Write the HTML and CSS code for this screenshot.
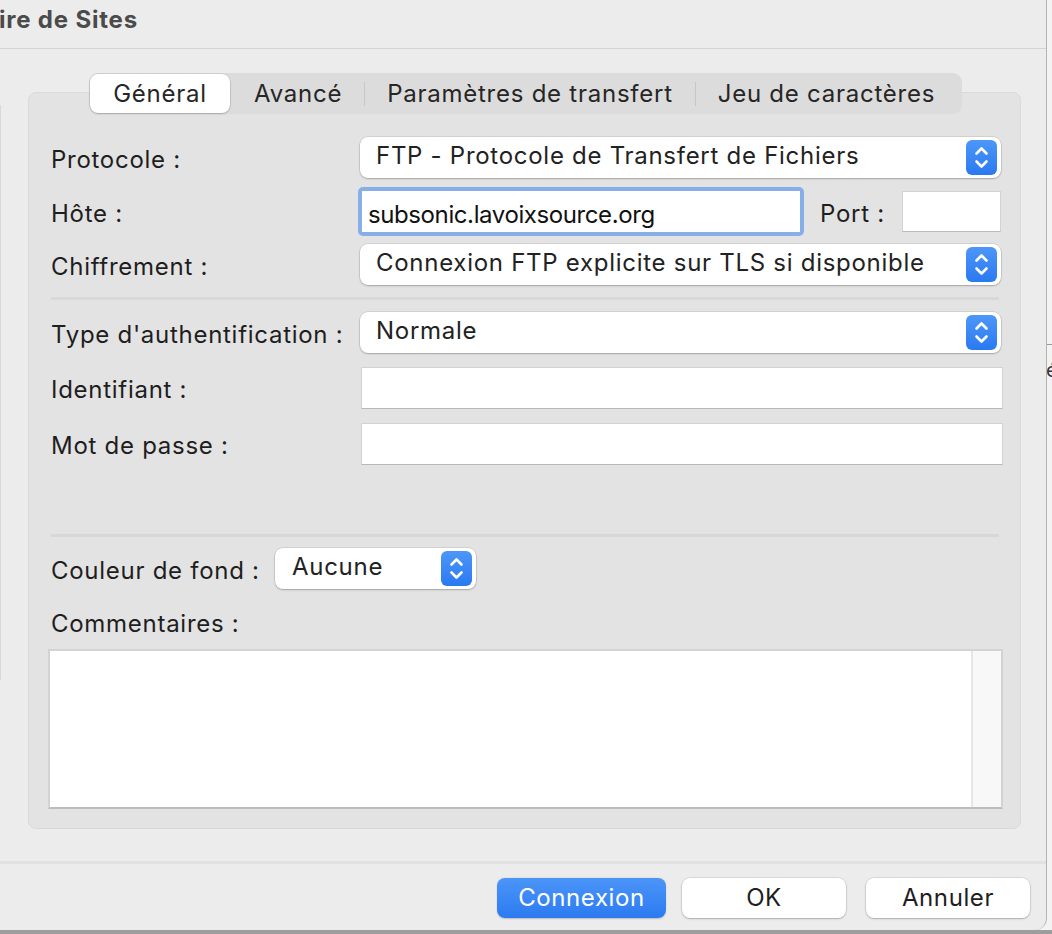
FILE: index.html
```html
<!DOCTYPE html>
<html lang="fr">
<head>
<meta charset="utf-8">
<title>Gestionnaire de Sites</title>
<link rel="stylesheet" href="styles.css">
</head>
<body>
<div class="screen">
  <div class="window">
    <div class="titlebar"><span class="title">ire de Sites</span></div>
    <div class="win-body">
      <div class="side"><div class="side-edge"></div></div>
      <div class="main">
        <div class="tabs">
          <div class="tab active">Général</div>
          <div class="tab">Avancé</div>
          <div class="tab-sep"></div>
          <div class="tab">Paramètres de transfert</div>
          <div class="tab-sep"></div>
          <div class="tab">Jeu de caractères</div>
        </div>
        <div class="panel">
          <div class="row r1">
            <div class="label">Protocole :</div>
            <div class="select full"><span class="sel-text">FTP - Protocole de Transfert de Fichiers</span><span class="stepper"><svg viewBox="0 0 31 35" width="31" height="35"><path d="M10.5 13.5 L15.5 8.5 L20.5 13.5" /><path d="M10.5 21.5 L15.5 26.5 L20.5 21.5" /></svg></span></div>
          </div>
          <div class="row r2">
            <div class="label">Hôte :</div>
            <div class="host-line">
              <div class="focus-ring"><div class="input host">subsonic.lavoixsource.org</div></div>
              <div class="port-label">Port :</div>
              <div class="input port"></div>
            </div>
          </div>
          <div class="row r3">
            <div class="label">Chiffrement :</div>
            <div class="select full"><span class="sel-text">Connexion FTP explicite sur TLS si disponible</span><span class="stepper"><svg viewBox="0 0 31 35" width="31" height="35"><path d="M10.5 13.5 L15.5 8.5 L20.5 13.5" /><path d="M10.5 21.5 L15.5 26.5 L20.5 21.5" /></svg></span></div>
          </div>
          <div class="sep sep1"></div>
          <div class="row r4">
            <div class="label">Type d'authentification :</div>
            <div class="select full"><span class="sel-text">Normale</span><span class="stepper"><svg viewBox="0 0 31 35" width="31" height="35"><path d="M10.5 13.5 L15.5 8.5 L20.5 13.5" /><path d="M10.5 21.5 L15.5 26.5 L20.5 21.5" /></svg></span></div>
          </div>
          <div class="row r5">
            <div class="label">Identifiant :</div>
            <div class="input plain"></div>
          </div>
          <div class="row r6">
            <div class="label">Mot de passe :</div>
            <div class="input plain"></div>
          </div>
          <div class="sep sep2"></div>
          <div class="row-color">
            <div class="label color-label">Couleur de fond :</div>
            <div class="select small"><span class="sel-text">Aucune</span><span class="stepper"><svg viewBox="0 0 31 35" width="31" height="35"><path d="M10.5 13.5 L15.5 8.5 L20.5 13.5" /><path d="M10.5 21.5 L15.5 26.5 L20.5 21.5" /></svg></span></div>
          </div>
          <div class="label comments-label">Commentaires :</div>
          <div class="textarea"><div class="ta-text"></div><div class="ta-scroll"></div></div>
        </div>
        <div class="footer-sep"></div>
        <div class="buttons">
          <button class="btn primary">Connexion</button>
          <button class="btn">OK</button>
          <button class="btn last">Annuler</button>
        </div>
      </div>
    </div>
  </div>
  <div class="outside">
    <div class="outside-line"></div>
    <div class="outside-glyph">é</div>
  </div>
</div>
<div class="desk-bottom"></div>
</body>
</html>
```
FILE: styles.css
```css
* { box-sizing: border-box; }
html, body { margin: 0; padding: 0; }
body {
  width: 1052px;
  height: 934px;
  overflow: hidden;
  background: #a9a9a9;
  font-family: Inter, "Liberation Sans", sans-serif;
  color: #1f1f1f;
}
.screen {
  display: flex;
  height: 930px;
  background: #f3f3f3;
}
.window {
  width: 1047px;
  height: 930px;
  background: #ececec;
  border-right: 1px solid #b3b3b3;
  border-bottom-right-radius: 12px;
  display: flex;
  flex-direction: column;
  overflow: hidden;
}
.outside {
  flex: 1;
  display: flex;
  flex-direction: column;
  overflow: hidden;
}
.outside-line {
  margin-top: 344px;
  height: 1px;
  background: #9a9a9a;
}
.outside-glyph {
  margin-top: 14px;
  margin-left: -1px;
  font-size: 20px;
  color: #333;
  line-height: 22px;
}
.desk-bottom {
  height: 4px;
  background: #9d9d9d;
}
.titlebar {
  height: 49px;
  border-bottom: 1px solid #d4d4d4;
  display: flex;
  align-items: flex-start;
}
.title {
  font-weight: 700;
  font-size: 24px;
  letter-spacing: 0.8px;
  line-height: 39px;
  color: #4b4b4b;
  margin-left: -1px;
}
.win-body {
  display: flex;
  flex: 1;
}
.side {
  width: 28px;
  flex: none;
}
.side-edge {
  margin-top: 56px;
  height: 575px;
  width: 1px;
  background: #d9d9d9;
}
.main {
  width: 1018px;
  display: flex;
  flex-direction: column;
  padding-top: 24px;
}
.tabs {
  position: relative;
  z-index: 1;
  align-self: flex-start;
  margin-left: 61px;
  width: 873px;
  height: 41px;
  background: #dcdcdc;
  border-radius: 9px;
  display: flex;
  align-items: center;
  padding-left: 1px;
}
.tab {
  font-size: 24px;
  letter-spacing: 0.75px;
  color: #262626;
  height: 39px;
  line-height: 39px;
  padding: 0 22px;
  white-space: nowrap;
}
.tab.active {
  background: #ffffff;
  border-radius: 8px;
  width: 140px;
  padding: 0;
  text-align: center;
  box-shadow: 0 0 0 0.5px rgba(0,0,0,0.12), 0 1px 2px rgba(0,0,0,0.2);
}
.tab.active + .tab { padding-left: 24px; }
.tab-sep {
  width: 1px;
  height: 24px;
  background: #c6c6c6;
}
.panel {
  margin-top: -22px;
  width: 993px;
  height: 737px;
  background: #e3e3e3;
  border: 1px solid #dadada;
  border-radius: 8px;
  padding: 44px 19px 0 22px;
  display: flex;
  flex-direction: column;
}
.row {
  display: grid;
  grid-template-columns: 309px 641px;
  align-items: center;
}
.label {
  font-size: 24px;
  letter-spacing: 0.72px;
  color: #1e1e1e;
  white-space: nowrap;
  padding-top: 3px;
}
.r1 { height: 41px; }
.r2 { height: 49px; margin-top: 9px; }
.r3 { height: 41px; margin-top: 8px; }
.r4 { height: 41px; }
.r5 { height: 41px; margin-top: 14px; }
.r6 { height: 41px; margin-top: 15px; }
.select {
  height: 41px;
  background: #ffffff;
  border-radius: 8px;
  box-shadow: 0 0 0 0.5px rgba(0,0,0,0.14), 0 1px 2px rgba(0,0,0,0.22);
  display: flex;
  align-items: center;
  justify-content: space-between;
  padding: 0 4px 0 16px;
}
.select.full { width: 641px; }
.sel-text {
  font-size: 24px;
  letter-spacing: 0.72px;
  color: #222;
  margin-top: -4px;
  white-space: nowrap;
}
.stepper {
  width: 31px;
  height: 35px;
  border-radius: 6px;
  background: linear-gradient(#4d97f8, #2a79f1);
  display: flex;
  flex: none;
}
.stepper svg path {
  fill: none;
  stroke: #ffffff;
  stroke-width: 2.6;
  stroke-linecap: round;
  stroke-linejoin: round;
}
.host-line {
  display: flex;
  align-items: center;
  margin-left: -2px;
  width: 643px;
}
.focus-ring {
  width: 446px;
  height: 49px;
  border-radius: 5px;
  background: #88aeea;
  padding: 4px;
  flex: none;
}
.input {
  background: #ffffff;
  border: 1px solid #d3d3d3;
  border-bottom-color: #b9b9b9;
}
.input.host {
  height: 41px;
  border: none;
  font-size: 24px;
  letter-spacing: -0.4px;
  color: #111;
  line-height: 47px;
  padding-left: 6px;
  white-space: nowrap;
}
.port-label {
  font-size: 24px;
  letter-spacing: 0.72px;
  margin-left: 16px;
  padding-top: 3px;
  color: #1e1e1e;
}
.input.port {
  margin-left: auto;
  width: 99px;
  height: 41px;
}
.input.plain {
  height: 42px;
  width: 642px;
  margin-left: 1px;
}
.sep {
  width: 948px;
  height: 3px;
  background: #d8d8d8;
}
.sep1 { margin: 12px 0 12px 0; }
.sep2 { margin: 70px 0 11px 0; }
.row-color {
  display: flex;
  align-items: center;
  height: 41px;
}
.color-label { width: 224px; flex: none; }
.select.small {
  width: 201px;
  padding-left: 17px;
}
.comments-label {
  margin-top: 17px;
  height: 30px;
  line-height: 30px;
}
.textarea {
  margin-top: 13px;
  margin-left: -3px;
  width: 955px;
  height: 160px;
  background: #ffffff;
  border: 2px solid #d3d3d3;
  border-bottom-color: #bcbcbc;
  display: flex;
}
.ta-text { flex: 1; }
.ta-scroll {
  width: 30px;
  background: #f8f8f8;
  border-left: 2px solid #e6e6e6;
}
.footer-sep {
  margin-top: 32px;
  margin-left: -28px;
  width: 1050px;
  height: 3px;
  background: #e1e1e1;
}
.buttons {
  display: flex;
  justify-content: flex-end;
  margin-top: 14px;
  width: 1002px;
}
.btn {
  font-family: Inter, "Liberation Sans", sans-serif;
  font-size: 24px;
  letter-spacing: 0.6px;
  height: 40px;
  width: 164px;
  border: none;
  border-radius: 8px;
  background: #ffffff;
  color: #1e1e1e;
  box-shadow: 0 0 0 0.5px rgba(0,0,0,0.14), 0 1px 2px rgba(0,0,0,0.22);
  margin-left: 16px;
  padding: 0 0 2px 0;
}
.btn.last { margin-left: 20px; }
.btn.primary {
  width: 169px;
  color: #ffffff;
  background: linear-gradient(#4b95f8, #2c7af2);
  box-shadow: 0 0.5px 1.5px rgba(0,0,0,0.2);
}
```
